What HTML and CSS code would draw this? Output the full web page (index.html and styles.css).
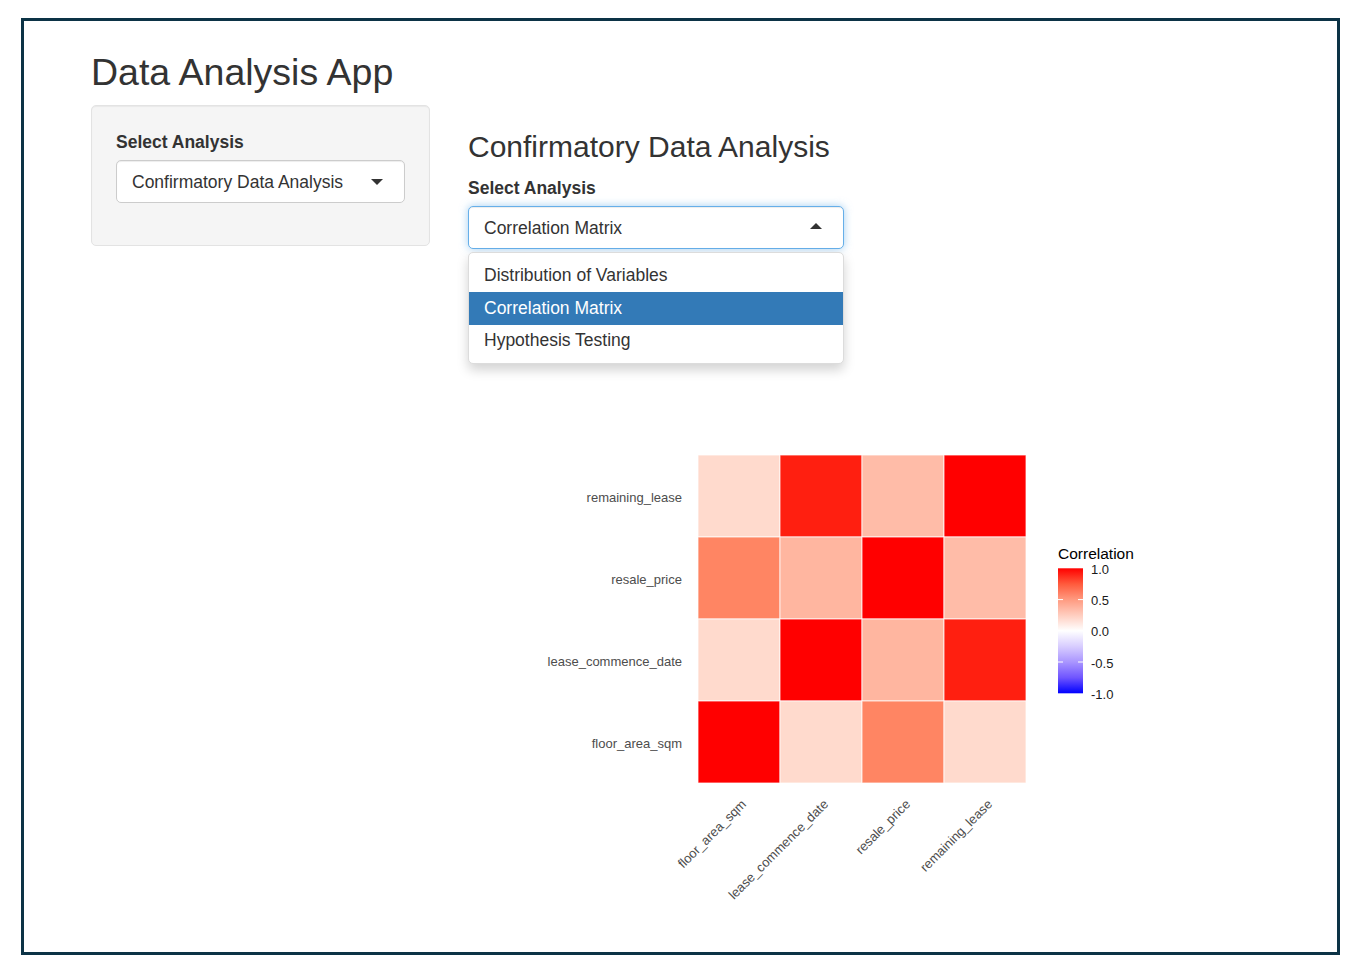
FILE: index.html
```html
<!DOCTYPE html>
<html lang="en">
<head>
<meta charset="utf-8">
<title>Data Analysis App</title>
<link rel="stylesheet" href="styles.css">
</head>
<body>
<div class="frame">
  <div class="app">
    <h2 class="title">Data Analysis App</h2>
    <div class="layout">
      <aside class="sidebar">
        <div class="form-group">
          <label class="label">Select Analysis</label>
          <div class="select">
            <span class="select-text">Confirmatory Data Analysis</span>
            <span class="caret caret-down"></span>
          </div>
        </div>
      </aside>
      <main class="main">
        <h3 class="subtitle">Confirmatory Data Analysis</h3>
        <div class="form-group main-group">
          <label class="label">Select Analysis</label>
          <div class="select-wrap">
            <div class="select select-focus">
              <span class="select-text">Correlation Matrix</span>
              <span class="caret caret-up"></span>
            </div>
            <div class="dropdown">
              <div class="option">Distribution of Variables</div>
              <div class="option option-active">Correlation Matrix</div>
              <div class="option">Hypothesis Testing</div>
            </div>
          </div>
        </div>
        <svg class="plot" width="735" height="660" viewBox="468 268 735 660" xmlns="http://www.w3.org/2000/svg">
          <defs>
            <linearGradient id="corrGrad" x1="0" y1="0" x2="0" y2="1">
              <stop offset="0" stop-color="#ff0000"/>
              <stop offset="0.125" stop-color="#ff5a3c"/>
              <stop offset="0.25" stop-color="#ff9a80"/>
              <stop offset="0.375" stop-color="#ffcdbf"/>
              <stop offset="0.5" stop-color="#ffffff"/>
              <stop offset="0.625" stop-color="#d8cdff"/>
              <stop offset="0.75" stop-color="#a995ff"/>
              <stop offset="0.875" stop-color="#6f55ff"/>
              <stop offset="1" stop-color="#0000ff"/>
            </linearGradient>
          </defs>
          <g class="tiles">
            <rect x="698" y="455" width="82" height="82" fill="#ffdacd"/>
            <rect x="780" y="455" width="82" height="82" fill="#ff1f10"/>
            <rect x="862" y="455" width="82" height="82" fill="#ffbca8"/>
            <rect x="944" y="455" width="82" height="82" fill="#ff0000"/>

            <rect x="698" y="537" width="82" height="82" fill="#ff8563"/>
            <rect x="780" y="537" width="82" height="82" fill="#ffb6a0"/>
            <rect x="862" y="537" width="82" height="82" fill="#ff0000"/>
            <rect x="944" y="537" width="82" height="82" fill="#ffbca8"/>

            <rect x="698" y="619" width="82" height="82" fill="#ffdacd"/>
            <rect x="780" y="619" width="82" height="82" fill="#ff0000"/>
            <rect x="862" y="619" width="82" height="82" fill="#ffb6a0"/>
            <rect x="944" y="619" width="82" height="82" fill="#ff1f10"/>

            <rect x="698" y="701" width="82" height="82" fill="#ff0000"/>
            <rect x="780" y="701" width="82" height="82" fill="#ffdacd"/>
            <rect x="862" y="701" width="82" height="82" fill="#ff8563"/>
            <rect x="944" y="701" width="82" height="82" fill="#ffdacd"/>
          </g>
          <g class="axis-y">
            <text x="682" y="501.5">remaining_lease</text>
            <text x="682" y="583.5">resale_price</text>
            <text x="682" y="665.5">lease_commence_date</text>
            <text x="682" y="747.5">floor_area_sqm</text>
          </g>
          <g class="axis-x">
            <text x="747" y="805" transform="rotate(-45 747 805)">floor_area_sqm</text>
            <text x="829" y="805" transform="rotate(-45 829 805)">lease_commence_date</text>
            <text x="911" y="805" transform="rotate(-45 911 805)">resale_price</text>
            <text x="993" y="805" transform="rotate(-45 993 805)">remaining_lease</text>
          </g>
          <g class="legend">
            <text class="legend-title" x="1058" y="559">Correlation</text>
            <rect x="1058" y="568.3" width="25" height="125" fill="url(#corrGrad)"/>
            <g class="ticks">
              <line x1="1058" y1="599.6" x2="1063" y2="599.6"/>
              <line x1="1078" y1="599.6" x2="1083" y2="599.6"/>
              <line x1="1058" y1="630.8" x2="1063" y2="630.8"/>
              <line x1="1078" y1="630.8" x2="1083" y2="630.8"/>
              <line x1="1058" y1="662" x2="1063" y2="662"/>
              <line x1="1078" y1="662" x2="1083" y2="662"/>
            </g>
            <text class="legend-label" x="1091" y="574">1.0</text>
            <text class="legend-label" x="1091" y="605">0.5</text>
            <text class="legend-label" x="1091" y="636">0.0</text>
            <text class="legend-label" x="1091" y="667.5">-0.5</text>
            <text class="legend-label" x="1091" y="698.5">-1.0</text>
          </g>
        </svg>
      </main>
    </div>
  </div>
</div>
</body>
</html>
```

FILE: styles.css
```css
html, body {
  margin: 0;
  padding: 0;
  background: #ffffff;
}

body {
  font-family: "Liberation Sans", Arial, Helvetica, sans-serif;
  font-size: 17.5px;
  line-height: 25px;
  color: #333333;
}

.frame {
  margin: 18px 0 0 21px;
  width: 1319px;
  height: 937px;
  box-sizing: border-box;
  border: 3px solid #0c3346;
  overflow: hidden;
}

.app {
  padding: 6px 0 0 67px;
}

.title {
  font-size: 37.5px;
  line-height: 41px;
  font-weight: 400;
  margin: 25px 0 12px;
  color: #333333;
}

.layout {
  display: flex;
  align-items: flex-start;
  gap: 38px;
}

.sidebar {
  width: 339px;
  box-sizing: border-box;
  background: #f5f5f5;
  border: 1px solid #e3e3e3;
  border-radius: 5px;
  padding: 24px;
  box-shadow: inset 0 1px 1px rgba(0, 0, 0, 0.05);
}

.form-group {
  margin-bottom: 18px;
}

.label {
  display: block;
  font-weight: 700;
  margin-bottom: 5px;
  line-height: 25px;
}

.select {
  height: 43px;
  box-sizing: border-box;
  border: 1px solid #cccccc;
  border-radius: 5px;
  background: #ffffff;
  padding: 0 21px 0 15px;
  display: flex;
  align-items: center;
  justify-content: space-between;
  box-shadow: inset 0 1px 1px rgba(0, 0, 0, 0.075);
}

.select-text {
  white-space: nowrap;
  padding-top: 1px;
}

.caret {
  width: 0;
  height: 0;
  border-left: 6px solid transparent;
  border-right: 6px solid transparent;
}

.caret-down {
  border-top: 6px solid #333333;
  margin-top: 1px;
}

.caret-up {
  border-bottom: 6px solid #333333;
  margin-top: -3px;
}

.main {
  flex: 1;
  min-width: 0;
}

.subtitle {
  font-size: 30px;
  line-height: 33px;
  font-weight: 400;
  margin: 25px 0 13px;
  color: #333333;
}

.main-group {
  margin-bottom: 18.5px;
}

.select-wrap {
  position: relative;
  width: 376px;
}

.select-focus {
  border-color: #66afe9;
  box-shadow: inset 0 1px 1px rgba(0, 0, 0, 0.075), 0 0 8px rgba(102, 175, 233, 0.6);
}

.dropdown {
  position: absolute;
  top: 46px;
  left: 0;
  width: 376px;
  box-sizing: border-box;
  background: #ffffff;
  border: 1px solid #dcdcdc;
  border-radius: 5px;
  padding: 6.5px 0 6px;
  box-shadow: 0 6px 12px rgba(0, 0, 0, 0.175);
  z-index: 10;
}

.option {
  padding: 3.75px 15px;
  line-height: 25px;
  color: #333333;
  white-space: nowrap;
}

.option-active {
  background: #337ab7;
  color: #ffffff;
}

.plot {
  display: block;
  font-family: "Liberation Sans", Arial, Helvetica, sans-serif;
}

.tiles rect {
  stroke: #ffffff;
  stroke-opacity: 0.75;
  stroke-width: 1;
}

.axis-y text {
  font-size: 13px;
  fill: #4d4d4d;
  text-anchor: end;
}

.axis-x text {
  font-size: 13px;
  fill: #4d4d4d;
  text-anchor: end;
}

.legend-title {
  font-size: 15.5px;
  fill: #000000;
}

.legend-label {
  font-size: 13px;
  fill: #1a1a1a;
}

.ticks line {
  stroke: #ffffff;
  stroke-width: 1;
}
```
